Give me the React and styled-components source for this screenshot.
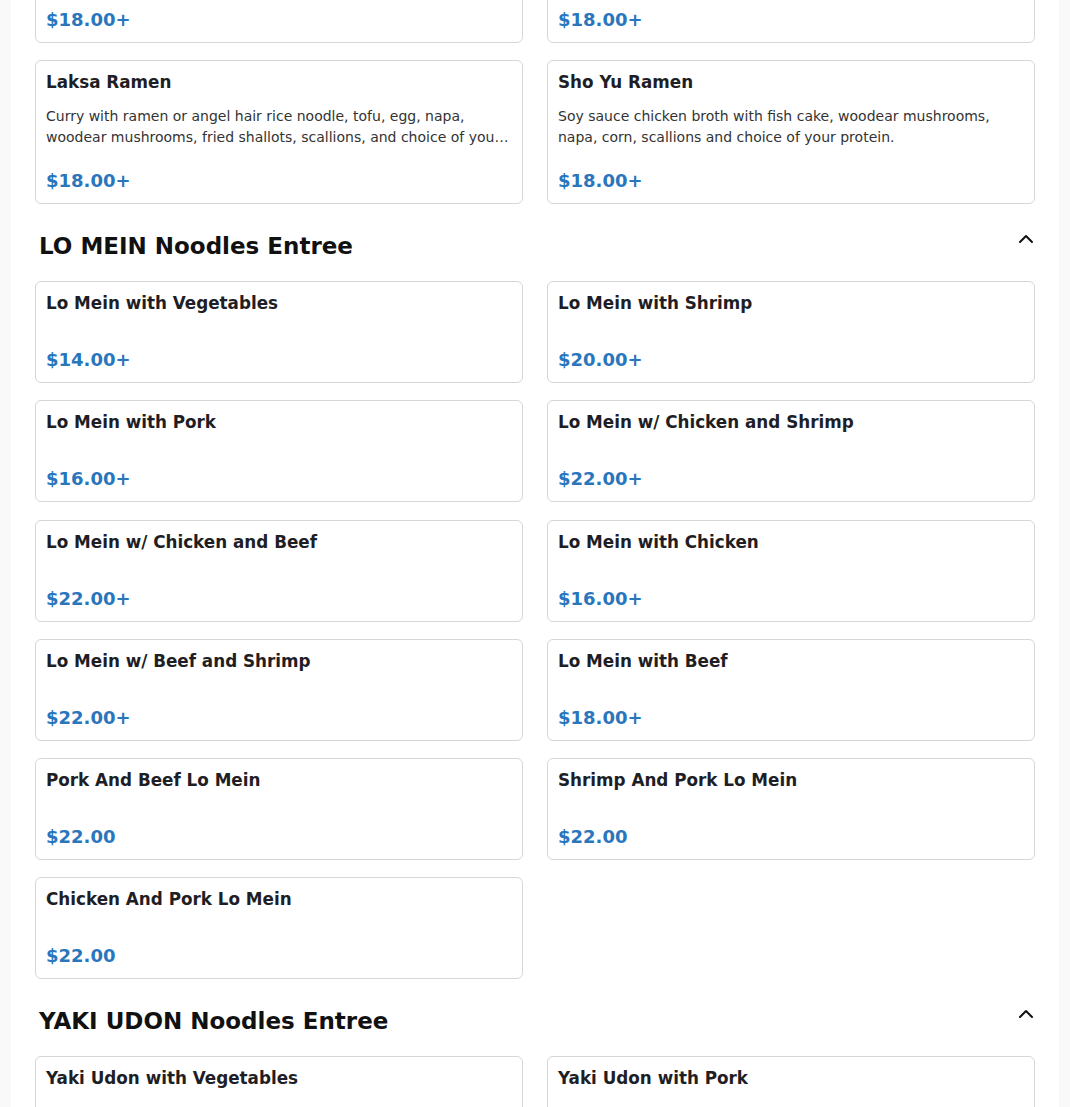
import React from "react";
import styled, { createGlobalStyle } from "styled-components";
import { ChevronUp } from "lucide-react";

const GlobalStyle = createGlobalStyle`
  html, body {
    margin: 0;
    padding: 0;
    background: #f9f9f9;
    font-family: "DejaVu Sans", "Liberation Sans", sans-serif;
  }
  * {
    box-sizing: border-box;
  }
`;

const Page = styled.div`
  margin: 0 11px;
  background: #fff;
  height: 1107px;
  overflow: hidden;
`;

// content is shown scrolled part-way down the menu
const Menu = styled.div`
  padding: 0 24px 40px;
  margin-top: -101px;
`;

const Section = styled.section`
  & + & {
    margin-top: 24px;
  }
`;

const SectionHeader = styled.div`
  display: flex;
  justify-content: space-between;
  align-items: flex-start;
  height: 36px;
  margin-bottom: 17px;
  padding-left: 4px;
  margin-right: -3px;
`;

const SectionTitle = styled.h2`
  margin: 0;
  font-size: 23px;
  line-height: 36px;
  font-weight: bold;
  color: #111;
`;

const Toggle = styled.button`
  border: none;
  background: none;
  padding: 0;
  width: 24px;
  height: 24px;
  margin-top: -1px;
  color: #111;
  display: flex;
  align-items: center;
  justify-content: center;
  cursor: pointer;
`;

const Grid = styled.div`
  display: grid;
  grid-template-columns: 1fr 1fr;
  column-gap: 24px;
  row-gap: 17.2px;
`;

const Card = styled.div`
  display: flex;
  flex-direction: column;
  border: 1px solid #d6d6d6;
  border-radius: 6px;
  padding: 9px 10px 10px;
  background: #fff;
`;

const ItemName = styled.div`
  font-size: 16.8px;
  line-height: 24px;
  font-weight: bold;
  color: #1e1e24;
  margin-bottom: 10px;
`;

const ItemDesc = styled.div`
  margin: 2px 0 -2px;
  font-size: 14px;
  line-height: 21px;
  color: #333;
  display: -webkit-box;
  -webkit-line-clamp: 2;
  -webkit-box-orient: vertical;
  overflow: hidden;
`;

const Price = styled.div`
  margin-top: 23px;
  font-size: 18px;
  line-height: 24px;
  font-weight: bold;
  color: #2a76bd;
`;

const sections = [
  {
    title: "RAMEN Noodles Entree",
    hidden: true,
    items: [
      {
        name: "Tonkotsu Ramen",
        desc: "Pork bone broth with chashu, egg, woodear mushrooms, scallions and choice of your protein.",
        price: "$18.00+",
      },
      {
        name: "Miso Ramen",
        desc: "Miso broth with corn, bean sprouts, egg, scallions and choice of your protein.",
        price: "$18.00+",
      },
      {
        name: "Laksa Ramen",
        desc: "Curry with ramen or angel hair rice noodle, tofu, egg, napa, woodear mushrooms, fried shallots, scallions, and choice of your protein.",
        price: "$18.00+",
      },
      {
        name: "Sho Yu Ramen",
        desc: "Soy sauce chicken broth with fish cake, woodear mushrooms, napa, corn, scallions and choice of your protein.",
        price: "$18.00+",
      },
    ],
  },
  {
    title: "LO MEIN Noodles Entree",
    items: [
      { name: "Lo Mein with Vegetables", price: "$14.00+" },
      { name: "Lo Mein with Shrimp", price: "$20.00+" },
      { name: "Lo Mein with Pork", price: "$16.00+" },
      { name: "Lo Mein w/ Chicken and Shrimp", price: "$22.00+" },
      { name: "Lo Mein w/ Chicken and Beef", price: "$22.00+" },
      { name: "Lo Mein with Chicken", price: "$16.00+" },
      { name: "Lo Mein w/ Beef and Shrimp", price: "$22.00+" },
      { name: "Lo Mein with Beef", price: "$18.00+" },
      { name: "Pork And Beef Lo Mein", price: "$22.00" },
      { name: "Shrimp And Pork Lo Mein", price: "$22.00" },
      { name: "Chicken And Pork Lo Mein", price: "$22.00" },
    ],
  },
  {
    title: "YAKI UDON Noodles Entree",
    items: [
      { name: "Yaki Udon with Vegetables", price: "$14.00+" },
      { name: "Yaki Udon with Pork", price: "$16.00+" },
    ],
  },
];

function MenuItem({ item }) {
  return (
    <Card>
      <ItemName>{item.name}</ItemName>
      {item.desc && <ItemDesc>{item.desc}</ItemDesc>}
      <Price>{item.price}</Price>
    </Card>
  );
}

export default function App() {
  return (
    <>
      <GlobalStyle />
      <Page>
        <Menu>
          {sections.map((section) => (
            <Section key={section.title}>
              {!section.hidden && (
                <SectionHeader>
                  <SectionTitle>{section.title}</SectionTitle>
                  <Toggle aria-label="Collapse section">
                    <ChevronUp size={24} strokeWidth={2} />
                  </Toggle>
                </SectionHeader>
              )}
              <Grid>
                {section.items.map((item) => (
                  <MenuItem key={item.name} item={item} />
                ))}
              </Grid>
            </Section>
          ))}
        </Menu>
      </Page>
    </>
  );
}
